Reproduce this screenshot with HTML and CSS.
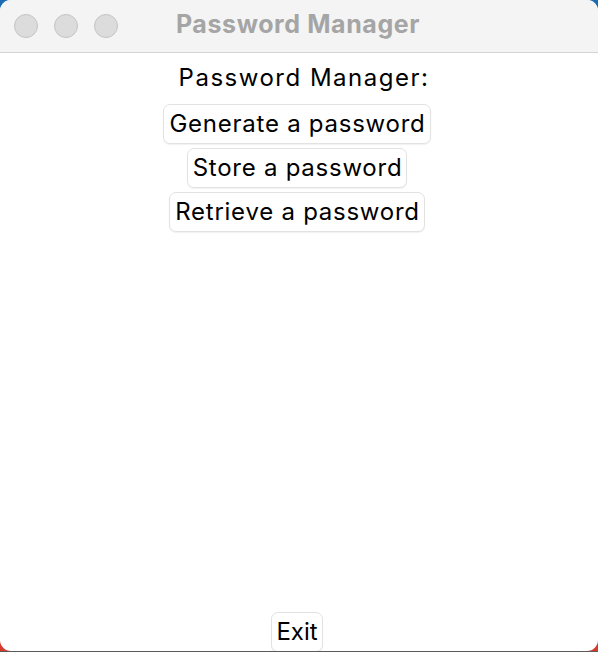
FILE: index.html
```html
<!DOCTYPE html>
<html>
<head>
<meta charset="utf-8">
<link rel="stylesheet" href="styles.css">
</head>
<body>
<div class="desk">
  <div class="window">
    <div class="titlebar">
      <div class="lights">
        <span class="light"></span>
        <span class="light"></span>
        <span class="light"></span>
      </div>
      <div class="title">Password Manager</div>
    </div>
    <div class="content">
      <div class="heading">Password Manager:</div>
      <button class="btn">Generate a password</button>
      <button class="btn">Store a password</button>
      <button class="btn">Retrieve a password</button>
      <button class="btn exit">Exit</button>
    </div>
  </div>
  <div class="baseline"></div>
</div>
</body>
</html>
```
FILE: styles.css
```css
html, body {
  margin: 0;
  padding: 0;
}
body {
  width: 598px;
  height: 652px;
  overflow: hidden;
  font-family: Inter, "Noto Sans", sans-serif;
}
.desk {
  width: 598px;
  height: 652px;
  display: flex;
  flex-direction: column;
  background: linear-gradient(to bottom, #1c6cb4 0%, #1c6cb4 45%, #d63a2c 55%, #d63a2c 100%);
}
.window {
  flex: 1;
  display: flex;
  flex-direction: column;
  background: #ffffff;
  border-radius: 11px;
  overflow: hidden;
}
.baseline {
  height: 1px;
  background: #5a5a5a;
}
.titlebar {
  height: 53px;
  box-sizing: border-box;
  border-bottom: 1px solid #d4d4d4;
  background: #f4f4f4;
  display: flex;
  align-items: center;
  position: relative;
}
.lights {
  display: flex;
  gap: 16px;
  padding-left: 14px;
}
.light {
  width: 22px;
  height: 22px;
  border-radius: 50%;
  background: #dcdcdc;
  border: 1px solid #c4c4c4;
}
.title {
  position: absolute;
  left: 0;
  right: 0;
  top: 0;
  bottom: 0;
  display: flex;
  align-items: center;
  justify-content: center;
  font-weight: 700;
  font-size: 25px;
  letter-spacing: 0.6px;
  color: #a5a5a5;
  padding-bottom: 5px;
  padding-right: 2px;
}
.content {
  flex: 1;
  display: flex;
  flex-direction: column;
  align-items: center;
  padding-top: 11px;
  padding-right: 4px;
  gap: 4px;
}
.heading {
  font-size: 24px;
  letter-spacing: 1.5px;
  color: #000;
  line-height: 28px;
  margin-bottom: 8px;
  margin-left: 14px;
}
.btn {
  font-family: inherit;
  font-size: 24px;
  letter-spacing: 0.75px;
  color: #000;
  background: #fff;
  border: 1px solid #e2e2e2;
  border-radius: 7px;
  height: 40px;
  padding: 0 4px 0 5px;
  line-height: 38px;
  box-shadow: 0 1px 1px rgba(0,0,0,0.06);
}
.exit {
  margin-top: auto;
  margin-bottom: -1px;
  letter-spacing: 0;
  padding: 0 4px 0 4px;
}
```
